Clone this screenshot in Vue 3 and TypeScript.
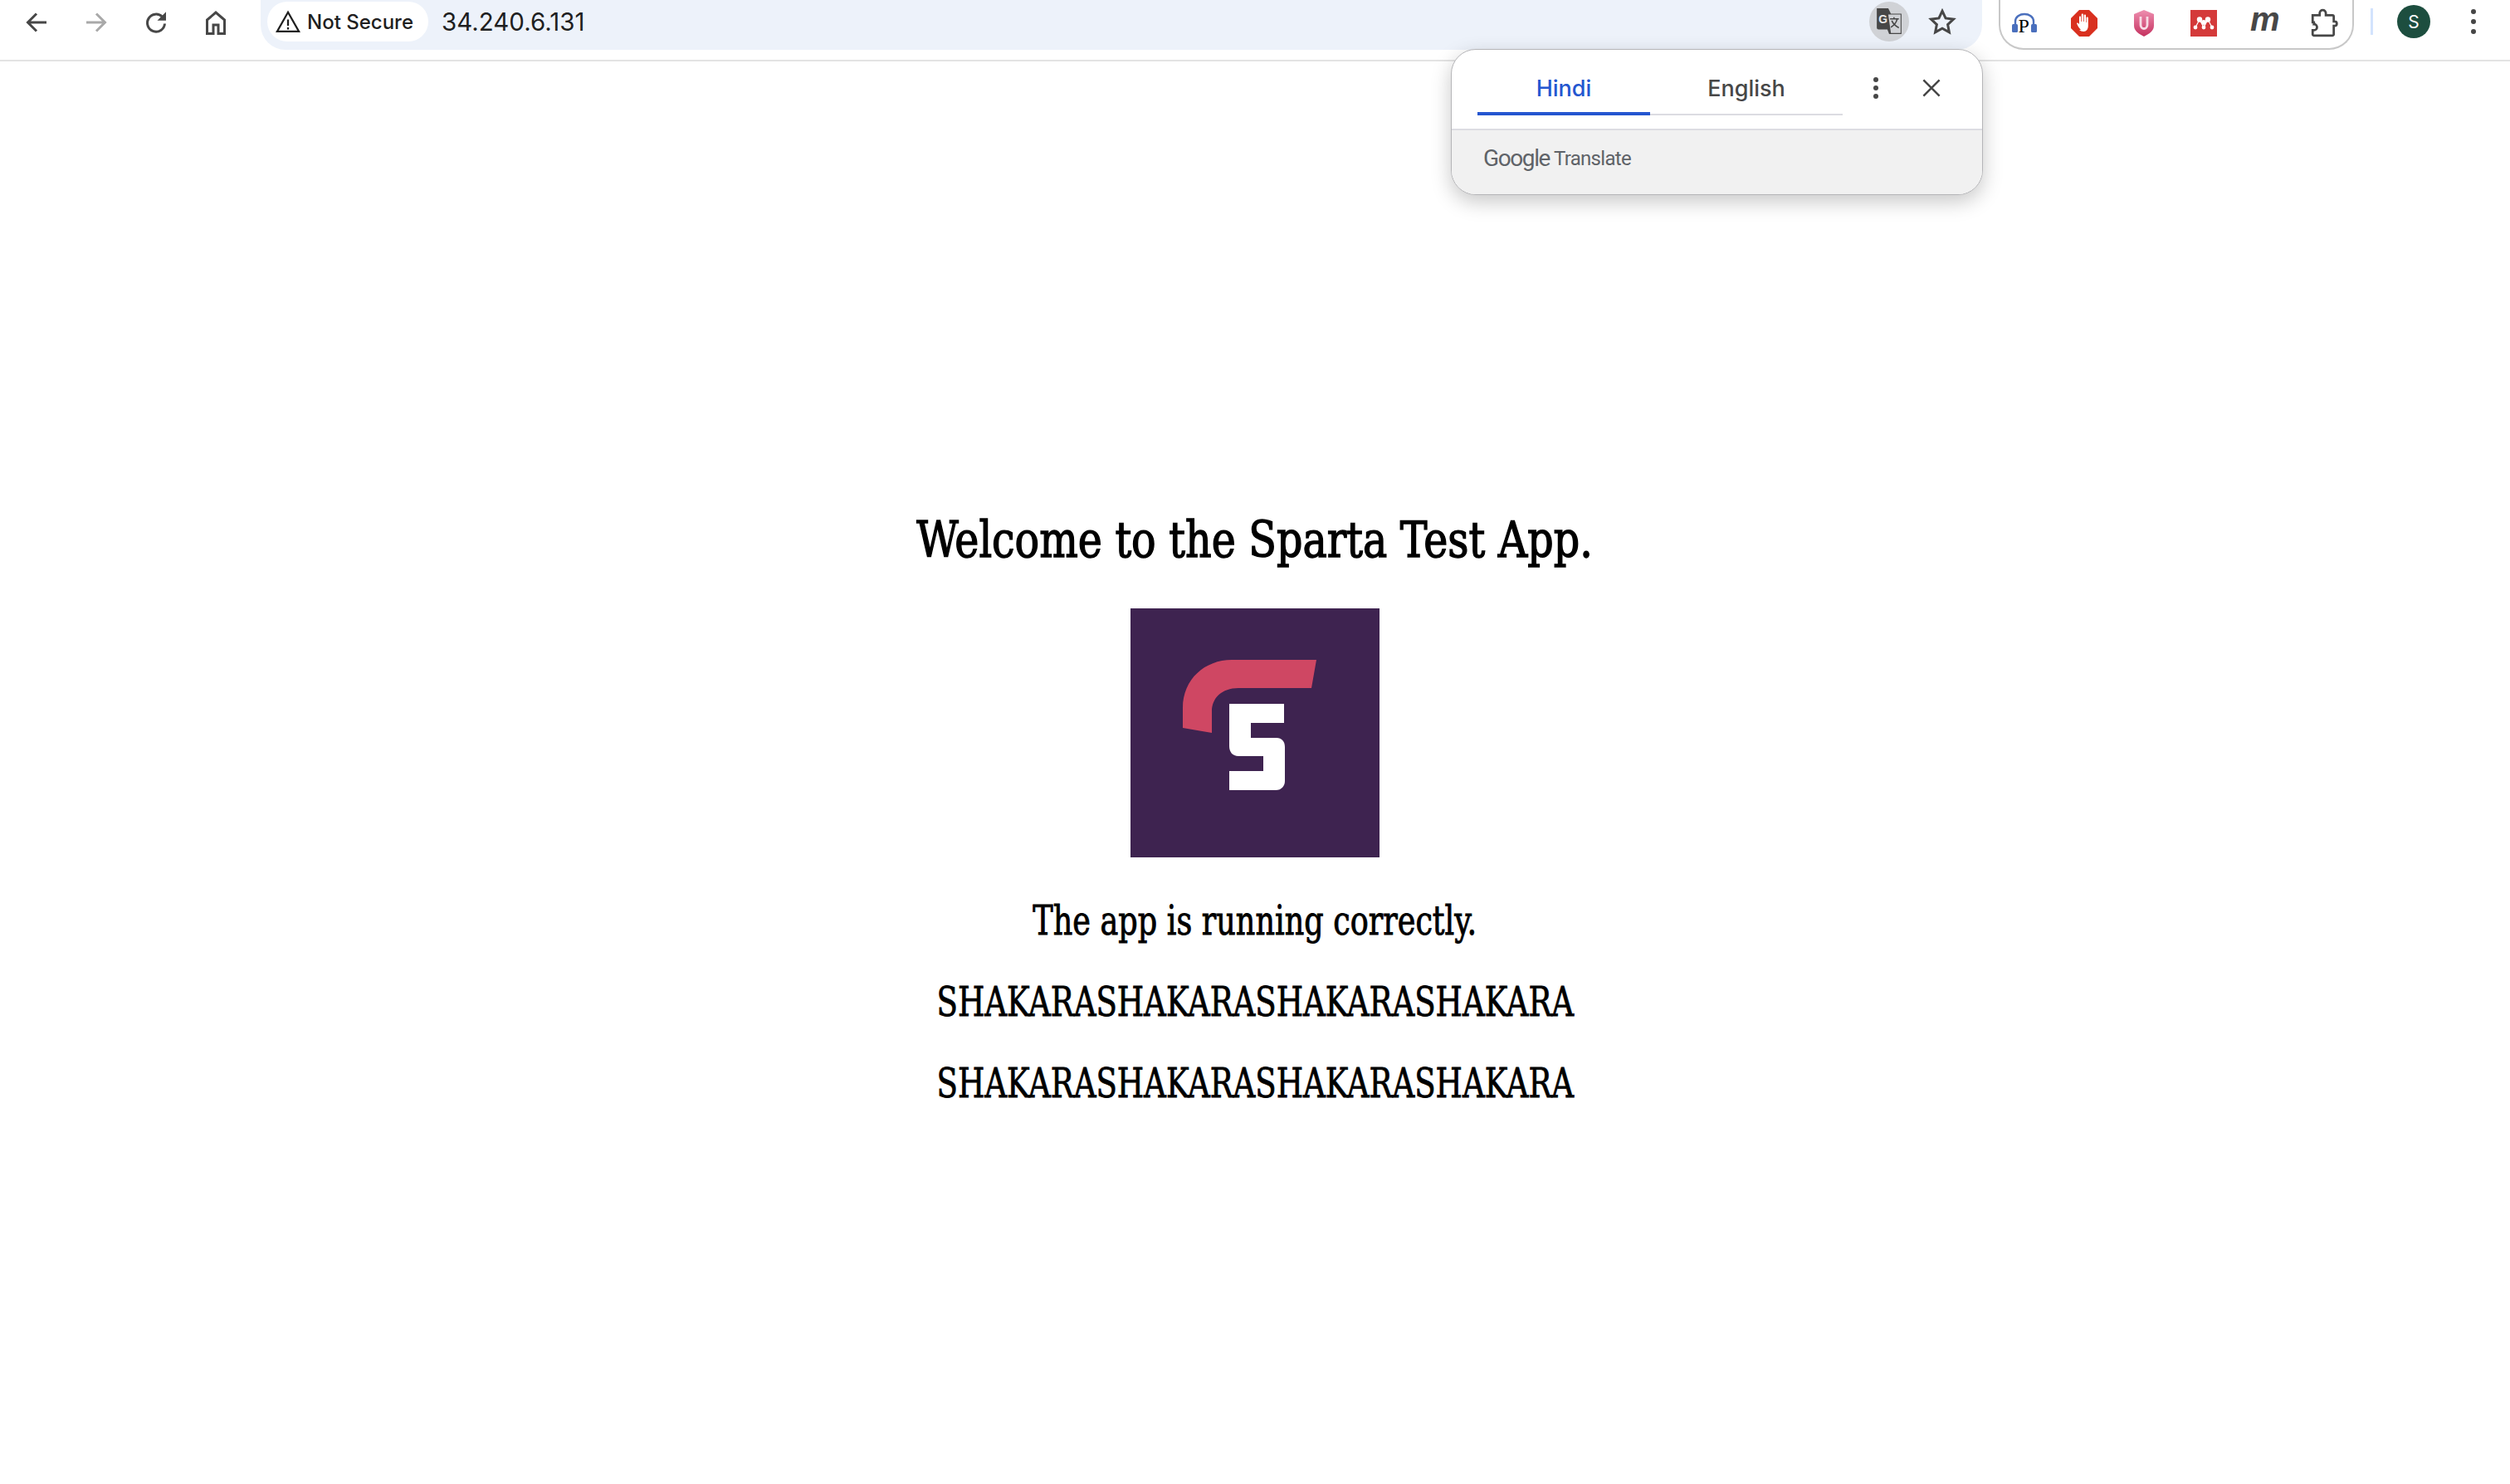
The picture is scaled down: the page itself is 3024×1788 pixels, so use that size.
<script setup lang="ts">
const lines = ["SHAKARASHAKARASHAKARASHAKARA", "SHAKARASHAKARASHAKARASHAKARA"];
</script>

<template>
  <div class="page">
    <header class="toolbar">
      <nav class="nav-icons">
        <svg class="ico" viewBox="0 0 24 24"><path d="M20 12H5M12 5l-7 7 7 7" fill="none" stroke="#474747" stroke-width="2" /></svg>
        <svg class="ico" viewBox="0 0 24 24"><path d="M4 12h15M12 5l7 7-7 7" fill="none" stroke="#a9a9a9" stroke-width="2" /></svg>
        <svg class="ico" viewBox="0 0 24 24">
          <path d="M19 13a7 7 0 1 1-2-5.500L19 9.500" fill="none" stroke="#474747" stroke-width="2" />
          <path d="M20 3.500V10.500H13z" fill="#474747" />
        </svg>
        <svg class="ico" viewBox="0 0 24 24"><path d="M5 21V10l7-6 7 6v11h-5v-7h-4v7z" fill="none" stroke="#474747" stroke-width="2" /></svg>
      </nav>
      <div class="omnibox">
        <div class="chip">
          <svg class="warn" viewBox="0 0 24 24"><path d="M12 3 1.500 21.500h21zM12 10v6M12 17.500v2" fill="none" stroke="#1f1f1f" stroke-width="1.800" /></svg>
          <span>Not Secure</span>
        </div>
        <span class="url">34.240.6.131</span>
        <div class="omni-right">
          <div class="translate-btn">
            <svg viewBox="0 0 32 32" width="34" height="34">
              <path d="M2 1h13l3 6h12v23H16l-2-5H4a2 2 0 0 1-2-2z" fill="#474747" />
              <path d="M15 8h14v21H18z" fill="#d0d2d6" />
              <text x="4" y="18" class="g-glyph">G</text>
              <path d="M17 13h10M21.500 11v2M25 13.500c-1 4-4 7-7 9M19 15c1.500 3.500 4 6 8 8" fill="none" stroke="#474747" stroke-width="1.500" />
            </svg>
          </div>
          <svg class="ico star" viewBox="0 0 24 24"><path d="M12 3.500l2.700 5.800 6.300.8-4.600 4.300 1.200 6.200L12 17.500l-5.600 3.100 1.200-6.200L3 10.100l6.300-.8z" fill="none" stroke="#474747" stroke-width="2" /></svg>
        </div>
      </div>
      <div class="extensions">
        <svg class="ext" viewBox="0 0 32 32">
          <path d="M5 19V14C5 2 27 2 27 14V19" fill="none" stroke="#4a6fbd" stroke-width="2.400" />
          <rect x="1" y="17" width="7" height="10" rx="1.500" fill="#4a6fbd" />
          <rect x="24" y="17" width="7" height="10" rx="1.500" fill="#4a6fbd" />
          <text x="8.500" y="27" class="p-glyph">P</text>
        </svg>
        <svg class="ext" viewBox="0 0 32 32">
          <path d="M10 0h12l10 10v12L22 32H10L0 22V10z" fill="#d9301f" />
          <path d="M12 24c-2-2-4-5-5-8 .5-1 1.800-.5 3 1V8.500c0-1.500 2-1.500 2 0V14h.7V5.500c0-1.500 2.300-1.500 2.300 0V14h.7V6.500c0-1.500 2.300-1.500 2.300 0V15h.6V9.500c0-1.500 2.200-1.500 2.200 0V19c0 4-2 7-5.500 7-2.300 0-4-.7-5.300-2z" fill="#fff" />
        </svg>
        <svg class="ext" viewBox="0 0 32 32">
          <defs>
            <linearGradient id="ublock" x1="0" y1="0" x2="0" y2="1">
              <stop offset="0" stop-color="#ee8fb0" />
              <stop offset="1" stop-color="#c5315f" />
            </linearGradient>
          </defs>
          <path d="M16 0l12 5v14c0 6-6 10-12 13C10 29 4 25 4 19V5z" fill="url(#ublock)" />
          <path d="M12 8v10c0 6 8 6 8 0V8" fill="none" stroke="#f7dbe5" stroke-width="2.800" />
        </svg>
        <svg class="ext" viewBox="0 0 32 32">
          <rect width="32" height="32" fill="#d43a3a" />
          <g fill="#fff">
            <circle cx="11" cy="11.500" r="3.200" />
            <circle cx="21" cy="11.500" r="3.200" />
            <circle cx="16" cy="15" r="3" />
            <circle cx="6" cy="21" r="2.400" />
            <circle cx="16" cy="21" r="2.400" />
            <circle cx="26" cy="21" r="2.400" />
          </g>
          <path d="M11 11.500 6 21M11 11.500 16 21M21 11.500 16 21M21 11.500 26 21" stroke="#fff" stroke-width="1.200" />
        </svg>
        <span class="ext-m">m</span>
        <svg class="ext puzzle" viewBox="0 0 32 34">
          <path d="M3 8h8V5.500a3.500 3.500 0 0 1 7 0V8h7.500A1.500 1.500 0 0 1 27 9.500V15h1a2.500 2.500 0 0 1 0 5h-1v9.500a1.500 1.500 0 0 1-1.500 1.500h-21A1.500 1.500 0 0 1 3 29.500V25h1.500a3.500 3.500 0 0 0 0-7 3.500 3.500 0 0 0 0-2H3z" fill="none" stroke="#474747" stroke-width="2.600" />
        </svg>
      </div>
      <div class="divider"></div>
      <div class="avatar">S</div>
      <svg class="kebab" viewBox="0 0 8 32"><circle cx="4" cy="4" r="3" /><circle cx="4" cy="16" r="3" /><circle cx="4" cy="28" r="3" /></svg>
    </header>

    <main class="content">
      <h1><span>Welcome to the Sparta Test App.</span></h1>
      <svg class="logo" viewBox="0 0 300 300">
        <rect width="300" height="300" fill="#3e2350" />
        <path d="M63 144V120C63 85 90 62 122 62H224L218 96H130C110 96 98 108 98 124V150Z" fill="#cf4763" />
        <path d="M119 115H185V138H145V156H176C182 156 186 160 186 167V208C186 214 182 219 175 219H119V196H160V178H130C123 178 119 173 119 166Z" fill="#fff" />
      </svg>
      <h2><span>The app is running correctly.</span></h2>
      <p v-for="(line, i) in lines" :key="i"><span>{{ line }}</span></p>
    </main>

    <aside class="bubble">
      <div class="bubble-top">
        <div class="tabs">
          <div class="tab active">Hindi</div>
          <div class="tab">English</div>
        </div>
        <svg class="b-kebab" viewBox="0 0 8 28"><circle cx="4" cy="4" r="3" /><circle cx="4" cy="14" r="3" /><circle cx="4" cy="24" r="3" /></svg>
        <svg class="b-close" viewBox="0 0 16 16"><path d="M1 1l14 14M15 1 1 15" stroke="#474747" stroke-width="1.800" /></svg>
      </div>
      <div class="bubble-foot">
        <span class="g-word">Google</span>
        <span class="t-word">Translate</span>
      </div>
    </aside>
  </div>
</template>

<style scoped>
.page {
  position: relative;
  min-height: 1788px;
  background: #fff;
  font-family: "Inter", "Liberation Sans", sans-serif;
}

.toolbar {
  height: 72px;
  display: flex;
  align-items: flex-start;
  border-bottom: 2px solid #e3e3e3;
  box-sizing: content-box;
}

.nav-icons {
  display: flex;
  gap: 36px;
  padding: 9px 0 0 26px;
  width: 314px;
  box-sizing: border-box;
}

.ico {
  width: 36px;
  height: 36px;
  flex: none;
}

.omnibox {
  width: 2074px;
  height: 60px;
  background: #edf2fa;
  border-radius: 0 0 30px 30px;
  display: flex;
  align-items: center;
  padding-left: 8px;
  box-sizing: border-box;
}

.chip {
  height: 48px;
  width: 194px;
  background: #fff;
  border-radius: 24px;
  display: flex;
  align-items: center;
  gap: 8px;
  padding-left: 10px;
  box-sizing: border-box;
  font-size: 24px;
  font-weight: 500;
  color: #1f1f1f;
  margin-top: -8px;
}

.warn {
  width: 30px;
  height: 30px;
  flex: none;
}

.url {
  margin-left: 16px;
  margin-top: -8px;
  font-size: 29.500px;
  color: #1f1f1f;
}

.omni-right {
  margin-left: auto;
  display: flex;
  align-items: center;
  gap: 22px;
  padding-right: 30px;
  margin-top: -8px;
}

.translate-btn {
  width: 48px;
  height: 48px;
  border-radius: 50%;
  background: #d0d2d6;
  display: flex;
  align-items: center;
  justify-content: center;
}

.g-glyph {
  font: 700 13px "Liberation Sans", sans-serif;
  fill: #e8e8e8;
}

.extensions {
  margin-left: 20px;
  width: 428px;
  height: 60px;
  border: 2px solid #c8c8c8;
  border-top: none;
  border-radius: 0 0 30px 30px;
  display: flex;
  align-items: center;
  gap: 40px;
  padding: 0 0 2px 13px;
  box-sizing: border-box;
}

.ext {
  width: 32px;
  height: 32px;
  flex: none;
  overflow: visible;
}

.puzzle {
  width: 34px;
  height: 36px;
}

.p-glyph {
  font: 400 24px "Liberation Serif", serif;
  fill: #000;
}

.ext-m {
  width: 32px;
  text-align: center;
  font: italic 700 40px "Liberation Sans", sans-serif;
  color: #474747;
  line-height: 32px;
  margin-top: -10px;
}

.divider {
  width: 3px;
  height: 32px;
  background: #d3e3fd;
  margin: 10px 0 0 20px;
}

.avatar {
  width: 40px;
  height: 40px;
  margin: 6px 0 0 29px;
  border-radius: 50%;
  background: #1d4e3f;
  color: #fff;
  font-size: 21px;
  display: flex;
  align-items: center;
  justify-content: center;
}

.kebab {
  width: 8px;
  height: 32px;
  margin: 10px 0 0 48px;
  fill: #474747;
}

.content {
  display: flex;
  flex-direction: column;
  align-items: center;
  padding-top: 538px;
  font-family: "DejaVu Serif Condensed", "DejaVu Serif", serif;
  color: #000;
}

.content span {
  display: inline-block;
  white-space: nowrap;
}

h1 {
  margin: 0;
  font-size: 60px;
  line-height: 76px;
  font-weight: 400;
}

h1 span {
  transform: scaleX(0.91);
  -webkit-text-stroke: 1.400px #000;
}

.logo {
  width: 300px;
  height: 300px;
  margin-top: 45px;
}

h2 {
  margin: 46px 0 0;
  font-size: 48px;
  line-height: 60px;
  font-weight: 400;
}

h2 span {
  transform: scaleX(0.847);
  -webkit-text-stroke: 0.900px #000;
}

p {
  margin: 38px 0 0;
  font-size: 48px;
  line-height: 60px;
}

p span {
  transform: scaleX(0.858);
  -webkit-text-stroke: 0.800px #000;
}

p + p {
  margin-top: 38px;
}

.bubble {
  position: absolute;
  left: 1748px;
  top: 59px;
  width: 641px;
  height: 176px;
  background: #fff;
  border-radius: 30px;
  border: 1px solid #b5b5b8;
  box-shadow: 0 8px 24px rgba(0, 0, 0, 0.22);
  overflow: hidden;
  box-sizing: border-box;
  display: flex;
  flex-direction: column;
}

.bubble-top {
  height: 95px;
  border-bottom: 2px solid #dcdce2;
  display: flex;
  align-items: flex-start;
  padding-left: 31px;
}

.tabs {
  display: flex;
  width: 440px;
  height: 79px;
}

.tab {
  font-size: 27px;
  font-weight: 500;
  color: #474747;
  text-align: center;
  line-height: 46px;
  padding-top: 24px;
  box-sizing: border-box;
  border-bottom: 2px solid #dcdce2;
  flex: 1;
}

.tab.active {
  flex: none;
  width: 208px;
  color: #2456d0;
  border-bottom: 4px solid #2456d0;
}

.b-kebab {
  width: 8px;
  height: 28px;
  margin: 32px 0 0 36px;
  fill: #474747;
}

.b-close {
  width: 22px;
  height: 22px;
  margin: 35px 0 0 52px;
}

.bubble-foot {
  flex: 1;
  background: #f1f1f1;
  display: flex;
  align-items: center;
  padding-left: 38px;
  padding-bottom: 10px;
  gap: 5px;
  color: #5f6368;
}

.g-word {
  font: 400 28px "Roboto", sans-serif;
  letter-spacing: -1.400px;
}

.t-word {
  font: 400 24px "Roboto", sans-serif;
  letter-spacing: -0.700px;
}
</style>
